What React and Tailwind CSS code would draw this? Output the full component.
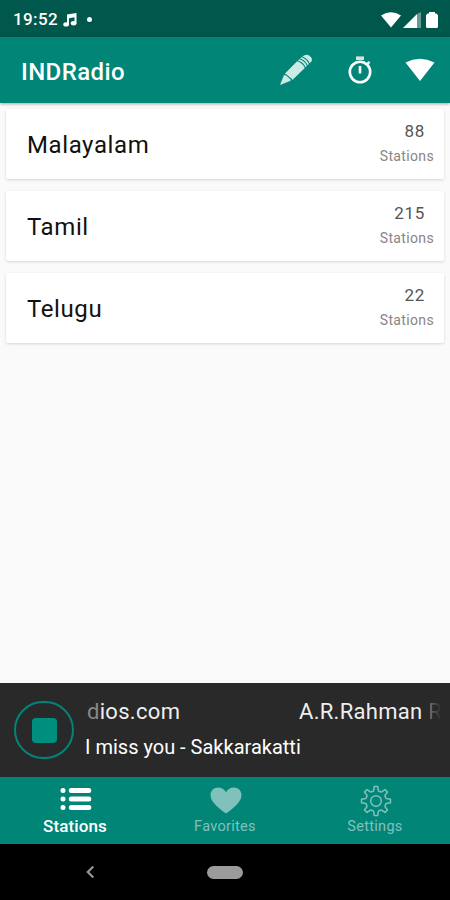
const stations = [
  { name: "Malayalam", count: 88 },
  { name: "Tamil", count: 215 },
  { name: "Telugu", count: 22 },
];

// outline of an eight-toothed gear centred on 16,16
const gearPath = () => {
  const pt = (r, deg) => {
    const a = (deg * Math.PI) / 180;
    return `${(16 + r * Math.cos(a)).toFixed(2)} ${(16 + r * Math.sin(a)).toFixed(2)}`;
  };
  let d = `M${pt(14.6, -97)}`;
  for (let i = 0; i < 8; i++) {
    const t = -90 + i * 45;
    d += `L${pt(14.6, t + 7)}L${pt(11.6, t + 11)}Q${pt(9.6, t + 15)} ${pt(10.4, t + 22.5)}Q${pt(9.6, t + 30)} ${pt(11.6, t + 34)}L${pt(14.6, t + 38)}`;
  }
  return d + "Z";
};

function StatusBar() {
  return (
    <div className="flex h-[37px] items-center bg-[#00574b] pt-[2px] pl-[13px] pr-[12px] text-white">
      <span className="text-[17px] font-medium leading-none tracking-[0.4px]">19:52</span>
      <svg className="ml-[5px]" width="14" height="14" viewBox="0 0 14 14" fill="currentColor">
        <path d="M4 1.5 13.5 0v10.2h-2V4.3L6 5.3v6.2H4z" />
        <ellipse cx="3.1" cy="11.4" rx="2.8" ry="2.2" />
        <ellipse cx="10.6" cy="10.2" rx="2.8" ry="2.2" />
      </svg>
      <span className="ml-[10px] h-[5px] w-[5px] rounded-full bg-white" />
      <svg className="ml-auto" width="20" height="16" viewBox="0 0 20 16" fill="currentColor">
        <path d="M0 3.6Q10-3.2 20 3.6L10 15.5z" />
      </svg>
      <svg className="ml-[2px]" width="18" height="16" viewBox="0 0 18 16" fill="currentColor">
        <path d="M0 16 14 2v14z" />
        <path d="M14 2l4-2v16h-4z" opacity=".4" />
      </svg>
      <svg className="ml-[5px]" width="12" height="16" viewBox="0 0 12 16" fill="currentColor">
        <path d="M3 0h6v1.5h1.5L12 3.2V14.5Q12 16 10.5 16h-9Q0 16 0 14.5V3.2L1.5 1.5H3z" />
      </svg>
    </div>
  );
}

function AppBar() {
  return (
    <header className="relative z-10 flex h-[66px] items-center bg-[#008577] pl-[21px] pr-[15px] text-white shadow-[0_1px_3px_rgba(0,0,0,0.35)]">
      <h1 className="pt-[3px] text-[24px] font-medium leading-none tracking-[0.4px]">INDRadio</h1>
      <svg className="ml-auto" width="32" height="32" viewBox="0 0 32 32" fill="#cdebe5">
        <path d="M0 31 4 21 6.2 21.600 10.6 25.600 10.600 26.800z" />
        <path d="M4.800 19.800 17.100 7.200Q22.500 8.700 24.800 13.900L12.400 26 11.700 24.800 6.200 20.200z" />
        <path d="M17.900 6.500 19.300 5.200Q24.700 6.600 26.900 12L25.600 13.200Q23.200 7.900 17.900 6.500z" />
        <path d="M20.100 4.400 21.400 3.200Q26.800 4.800 28.900 10L27.700 11.300Q25.500 6 20.100 4.400z" />
        <path d="M22.200 2.500Q26.200-.2 29.100 1.500 33.300 4.500 31.200 7.800L29.700 9.200Q27.500 4 22.200 2.500z" />
      </svg>
      <svg className="ml-[36px]" width="24" height="28" viewBox="0 0 24 28" fill="none" stroke="currentColor">
        <path d="M8 2.200h8" stroke="#dedede" strokeWidth="3.600" />
        <circle cx="12" cy="16" r="10.200" strokeWidth="2.600" />
        <path d="M12 10v7.500" strokeWidth="2.600" />
        <path d="m18.800 8.500 2.700-2.700" strokeWidth="2.400" />
      </svg>
      <svg className="ml-[33px]" width="30" height="24" viewBox="0 0 30 24" fill="currentColor">
        <path d="M.5 4.500Q14.800-2.800 29.500 4.500L15 23z" />
      </svg>
    </header>
  );
}

function StationCard({ name, count }) {
  return (
    <li className="flex h-[70px] justify-between rounded-[2px] bg-white pl-[21px] pr-[10px] shadow-[0_1px_3px_rgba(0,0,0,0.15)]">
      <span className="self-center pt-[2px] text-[24px] leading-none tracking-[0.6px] text-[#111]">{name}</span>
      <div className="flex flex-col items-end pt-[13px]">
        <span className="pr-[9px] text-[17px] leading-[18px] tracking-[0.7px] text-[#555]">{count}</span>
        <span className="mt-[8px] text-[14px] leading-[17px] tracking-[0.35px] text-[#868686]">Stations</span>
      </div>
    </li>
  );
}

function Player() {
  return (
    <section className="flex h-[94px] items-center bg-[#292929] pl-[14px] pr-[12px] text-white">
      <button className="flex h-[58px] w-[60px] shrink-0 items-center justify-center rounded-full border-2 border-[#008577]">
        <span className="h-[25px] w-[25px] rounded-[4px] bg-[#008f7f]" />
      </button>
      <div className="ml-[11px] min-w-0 flex-1 pb-[3px]">
        <div className="flex whitespace-nowrap text-[22px] leading-[28px] tracking-[0.3px] text-[#eee]">
          <span className="ml-[2px] w-[212px] shrink-0">
            <span className="text-[#888]">d</span>ios.com
          </span>
          <span>
            A.R.Rahman <span className="bg-gradient-to-r from-[#777] to-[#292929] bg-clip-text text-transparent">R</span>
          </span>
        </div>
        <div className="mt-[8px] text-[20px] leading-[26px]">I miss you - Sakkarakatti</div>
      </div>
    </section>
  );
}

function BottomNav() {
  return (
    <nav className="grid h-[67px] grid-cols-3 bg-[#008577] text-[#80c2bb]">
      <div className="flex flex-col items-center pt-[10px] text-white">
        <svg className="ml-px" width="32" height="24" viewBox="0 0 32 24" stroke="currentColor" strokeWidth="5" strokeLinecap="round">
          <path d="M3 3.5h.01M3 12h.01M3 20.5h.01M11.3 3.5h17.5M11.3 12h17.5M11.3 20.5h17.5" />
        </svg>
        <span className="mt-[5px] text-[17px] font-medium leading-[20px] tracking-[0.1px]">Stations</span>
      </div>
      <div className="flex flex-col items-center pt-[10px]">
        <svg className="ml-px" width="32" height="27" viewBox="0 0 32 27" fill="currentColor">
          <path d="M16 26.5C11 23 .5 15.5.5 8.3.5 3.5 4 .5 8.2.5c3.5 0 6 1.8 7.8 4.7C17.8 2.3 20.3.5 23.8.5c4.2 0 7.7 3 7.7 7.8C31.5 15.5 21 23 16 26.5z" />
        </svg>
        <span className="mt-[4px] text-[14.5px] leading-[18px] tracking-[0.3px]">Favorites</span>
      </div>
      <div className="flex flex-col items-center pt-[8px]">
        <svg className="ml-px" width="32" height="32" viewBox="0 0 32 32" fill="none" stroke="currentColor" strokeWidth="1.5" strokeLinejoin="round">
          <path d={gearPath()} />
          <circle cx="16" cy="16" r="5.3" />
        </svg>
        <span className="mt-[1px] text-[14.5px] leading-[18px] tracking-[0.3px]">Settings</span>
      </div>
    </nav>
  );
}

function SystemBar() {
  return (
    <div className="grid h-[56px] grid-cols-5 items-center justify-items-center bg-black">
      <svg className="col-start-1 -mr-[5px] justify-self-end" width="9" height="14" viewBox="0 0 9 14" fill="none" stroke="#969696" strokeWidth="2.2">
        <path d="M7.3 1.5 1.8 7l5.5 5.5" />
      </svg>
      <span className="col-start-3 h-[13px] w-[36px] rounded-full bg-[#9b9b9b]" />
    </div>
  );
}

export default function App() {
  return (
    <div className="flex h-[900px] w-[450px] flex-col bg-[#fafafa] font-['Roboto',sans-serif]">
      <StatusBar />
      <AppBar />
      <ul className="flex flex-1 flex-col gap-[12px] pt-[6px] pr-[6px] pl-[6px]">
        {stations.map((s) => (
          <StationCard key={s.name} name={s.name} count={s.count} />
        ))}
      </ul>
      <Player />
      <BottomNav />
      <SystemBar />
    </div>
  );
}
